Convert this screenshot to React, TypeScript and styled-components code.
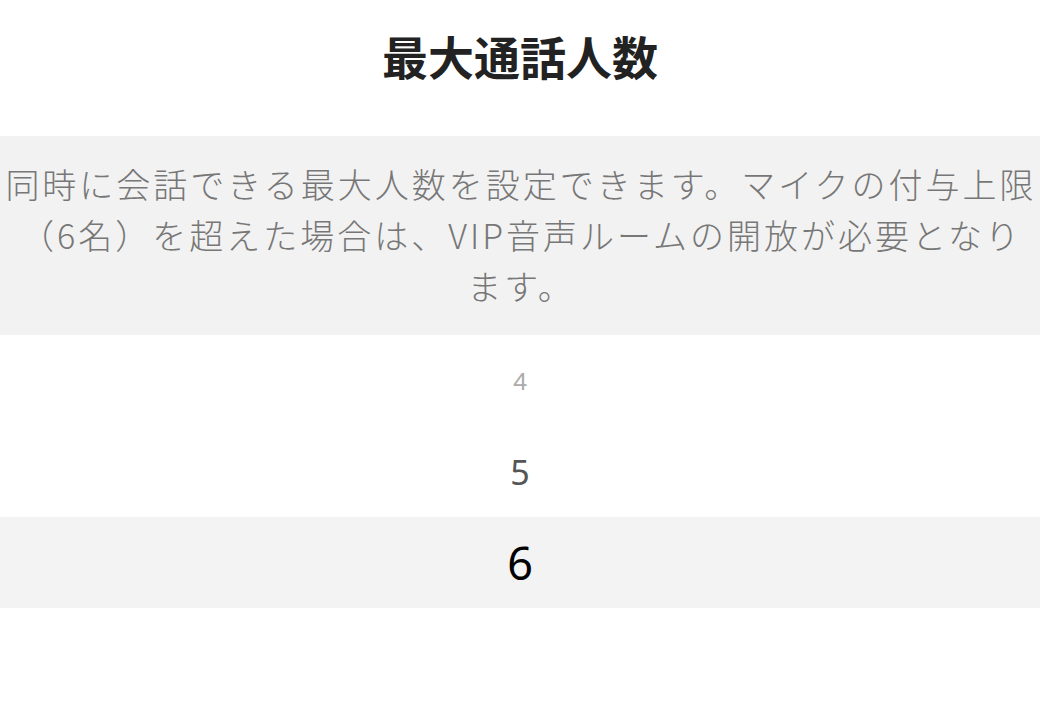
import React from "react";
import styled, { createGlobalStyle } from "styled-components";

const Global = createGlobalStyle`
  html, body {
    margin: 0;
    padding: 0;
    background: #ffffff;
  }
  body {
    font-family: "Noto Sans CJK JP", "Noto Sans", sans-serif;
  }
`;

const Page = styled.div`
  width: 1040px;
  height: 710px;
  display: flex;
  flex-direction: column;
  background: #ffffff;
  overflow: hidden;
`;

const Header = styled.header`
  height: 136px;
  display: flex;
  align-items: flex-start;
  justify-content: center;
  padding-top: 23px;
  box-sizing: border-box;
`;

const Title = styled.h1`
  margin: 0;
  font-size: 46px;
  line-height: 64px;
  font-weight: 700;
  color: #222222;
`;

const Notice = styled.p`
  margin: 0;
  background: #f2f2f2;
  height: 199px;
  box-sizing: border-box;
  padding: 22px 0 0 2px;
  text-align: center;
  font-size: 34px;
  font-weight: 300;
  line-height: 51px;
  letter-spacing: 3px;
  color: #777777;
`;

const Wheel = styled.ul`
  list-style: none;
  margin: 0;
  padding: 0;
  display: flex;
  flex-direction: column;
`;

type Level = 0 | 1 | 2;

const sizes = [24, 34, 45];
const colors = ["#aaaaaa", "#555555", "#000000"];

const Option = styled.li<{ $level: Level }>`
  height: 91px;
  display: flex;
  align-items: center;
  justify-content: center;
  font-family: "Noto Sans", "Noto Sans CJK JP", sans-serif;
  font-size: ${(p) => sizes[p.$level]}px;
  color: ${(p) => colors[p.$level]};
  background: ${(p) => (p.$level === 2 ? "#f3f3f3" : "transparent")};
`;

const options: { value: number; level: Level }[] = [
  { value: 4, level: 0 },
  { value: 5, level: 1 },
  { value: 6, level: 2 },
];

export default function App() {
  return (
    <Page>
      <Global />
      <Header>
        <Title>最大通話人数</Title>
      </Header>
      <Notice>
        同時に会話できる最大人数を設定できます。マイクの付与上限
        <br />
        （6名）を超えた場合は、VIP音声ルームの開放が必要となり
        <br />
        ます。
      </Notice>
      <Wheel>
        {options.map((o) => (
          <Option key={o.value} $level={o.level}>
            {o.value}
          </Option>
        ))}
      </Wheel>
    </Page>
  );
}
